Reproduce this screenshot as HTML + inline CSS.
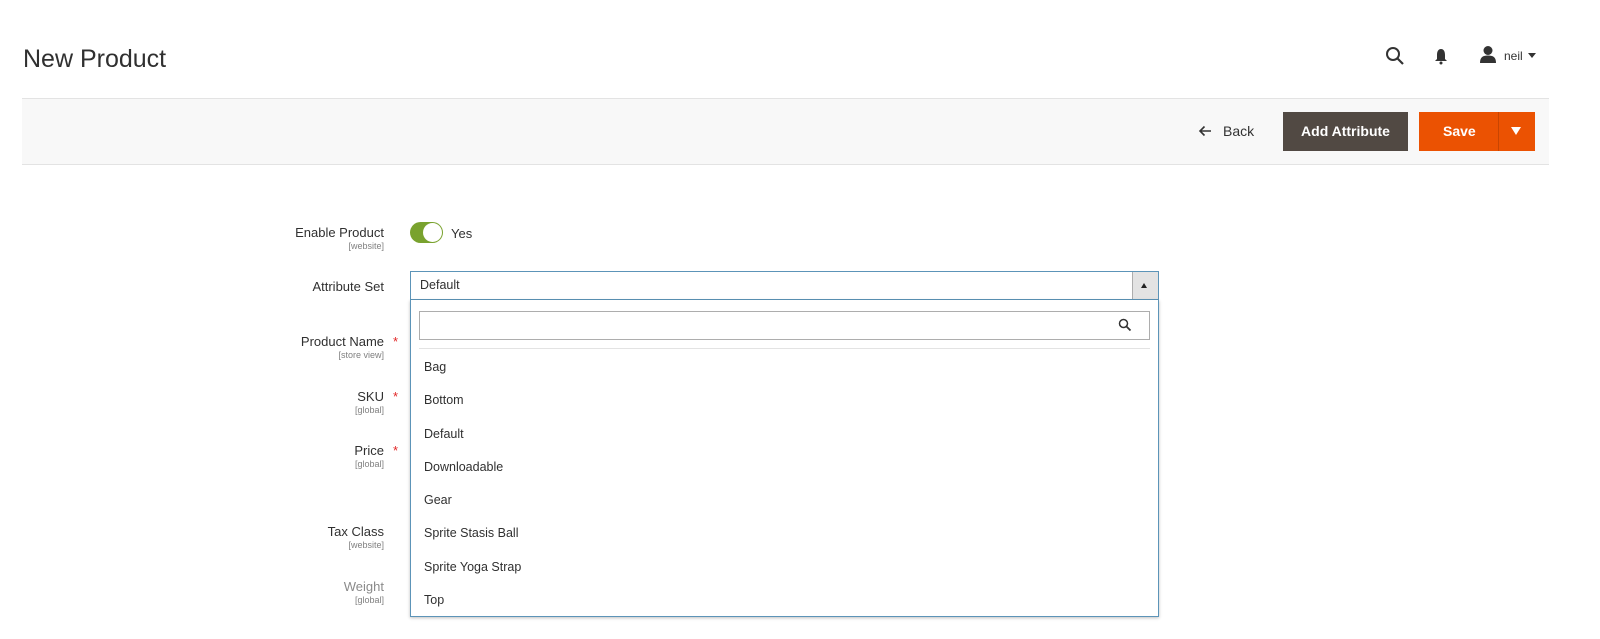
<!DOCTYPE html>
<html><head><meta charset="utf-8"><style>
*{box-sizing:border-box;margin:0;padding:0}
body{width:1600px;height:639px;background:#fff;font-family:"Liberation Sans",sans-serif;color:#303030;position:relative;overflow:hidden}
.a{position:absolute}
.lbl{position:absolute;right:1216px;text-align:right;font-size:13px;color:#303030;white-space:nowrap}
.sc{position:absolute;right:1216px;font-size:9px;color:#808080;white-space:nowrap}
.star{position:absolute;left:393px;color:#e22626;font-size:13px}
.opt{position:absolute;left:424px;font-size:12.5px;color:#303030}
</style></head><body>
<div class="a" style="left:23px;top:45px;font-size:25px;color:#303030">New Product</div>
<svg class="a" style="left:1385px;top:46px" width="20" height="20" viewBox="0 0 20 20"><circle cx="8" cy="8" r="6" fill="none" stroke="#333" stroke-width="2"/><path d="M12.5 12.5L18 18" stroke="#333" stroke-width="2.2"/></svg>
<svg class="a" style="left:1433px;top:48px" width="16" height="18" viewBox="0 0 16 18"><path d="M8 1C5 1 4 4 4 7L4 11L2 13L14 13L12 11L12 7C12 4 11 1 8 1Z" fill="#333"/><circle cx="8" cy="15" r="1.5" fill="#333"/></svg>
<svg class="a" style="left:1479px;top:45px" width="18" height="19" viewBox="0 0 18 19"><circle cx="9" cy="5.5" r="4.5" fill="#333"/><path d="M1 18C1 12 4 10.5 9 10.5C14 10.5 17 12 17 18Z" fill="#333"/></svg>
<div class="a" style="left:1504px;top:49px;font-size:12px;color:#333">neil</div>
<div class="a" style="left:1528px;top:53px;width:0;height:0;border-left:4px solid transparent;border-right:4px solid transparent;border-top:5px solid #333"></div>
<div class="a" style="left:22px;top:98px;width:1527px;height:67px;background:#f8f8f8;border-top:1px solid #e3e3e3;border-bottom:1px solid #e3e3e3"></div>
<svg class="a" style="left:1198px;top:125px" width="14" height="12" viewBox="0 0 14 12"><path d="M13 6H2M6.5 1.5L2 6L6.5 10.5" fill="none" stroke="#333" stroke-width="1.6"/></svg>
<div class="a" style="left:1223px;top:123px;font-size:14px;color:#333">Back</div>
<div class="a" style="left:1283px;top:112px;width:125px;height:39px;background:#514943;color:#fff;font-weight:bold;font-size:14px;line-height:39px;text-align:center">Add Attribute</div>
<div class="a" style="left:1419px;top:112px;width:116px;height:39px;background:#eb5202;color:#fff;font-weight:bold;font-size:14px;line-height:39px"><span style="position:absolute;left:24px">Save</span><div style="position:absolute;left:79px;top:0;width:1px;height:39px;background:#c84501"></div><div style="position:absolute;left:92px;top:15px;border-left:5px solid transparent;border-right:5px solid transparent;border-top:8px solid #fff"></div></div>

<div class="lbl" style="top:225px">Enable Product</div><div class="sc" style="top:241px">[website]</div>
<div class="a" style="left:410px;top:222px;width:33px;height:21px;border-radius:11px;background:#79a22e"></div>
<div class="a" style="left:423px;top:223px;width:19px;height:19px;border-radius:50%;background:#fff"></div>
<div class="a" style="left:451px;top:226px;font-size:13px">Yes</div>

<div class="lbl" style="top:279px">Attribute Set</div>
<div class="lbl" style="top:334px">Product Name</div><div class="sc" style="top:350px">[store view]</div><div class="star" style="top:334px">*</div>
<div class="lbl" style="top:389px">SKU</div><div class="sc" style="top:405px">[global]</div><div class="star" style="top:389px">*</div>
<div class="lbl" style="top:443px">Price</div><div class="sc" style="top:459px">[global]</div><div class="star" style="top:443px">*</div>
<div class="lbl" style="top:524px">Tax Class</div><div class="sc" style="top:540px">[website]</div>
<div class="lbl" style="top:579px;color:#8a8a8a">Weight</div><div class="sc" style="top:595px">[global]</div>

<div class="a" style="left:410px;top:271px;width:749px;height:29px;border:1px solid #5c94b8;background:#fff"></div>
<div class="a" style="left:420px;top:278px;font-size:12.5px">Default</div>
<div class="a" style="left:1132px;top:272px;width:26px;height:27px;background:#e3e3e3;border-left:1px solid #adadad"></div>
<div class="a" style="left:1141px;top:283px;border-left:3.5px solid transparent;border-right:3.5px solid transparent;border-bottom:5px solid #222"></div>
<div class="a" style="left:410px;top:300px;width:749px;height:317px;border:1px solid #5c94b8;border-top:0;background:#fff;box-shadow:0 1px 3px rgba(0,0,0,.25)"></div>
<div class="a" style="left:419px;top:311px;width:731px;height:29px;border:1px solid #adadad;background:#fff"></div>
<svg class="a" style="left:1118px;top:318px" width="14" height="14" viewBox="0 0 14 14"><circle cx="5.5" cy="5.5" r="4" fill="none" stroke="#333" stroke-width="1.5"/><path d="M8.5 8.5L12.5 12.5" stroke="#333" stroke-width="1.8"/></svg>
<div class="a" style="left:419px;top:348px;width:731px;height:1px;background:#e3e3e3"></div>
<div class="opt" style="top:360px">Bag</div>
<div class="opt" style="top:393px">Bottom</div>
<div class="opt" style="top:427px">Default</div>
<div class="opt" style="top:460px">Downloadable</div>
<div class="opt" style="top:493px">Gear</div>
<div class="opt" style="top:526px">Sprite Stasis Ball</div>
<div class="opt" style="top:560px">Sprite Yoga Strap</div>
<div class="opt" style="top:593px">Top</div>
</body></html>
